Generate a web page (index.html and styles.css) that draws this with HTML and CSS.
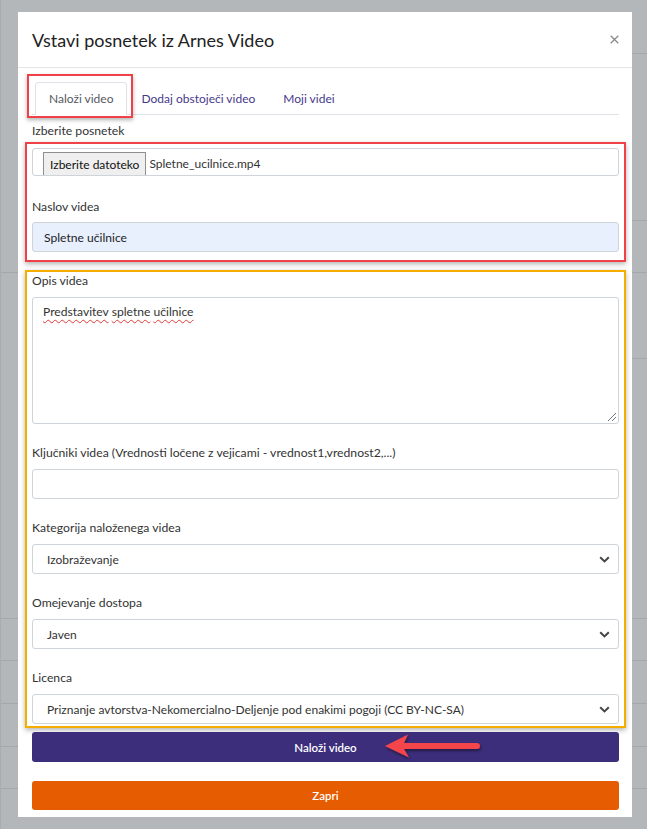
FILE: index.html
```html
<!DOCTYPE html>
<html lang="sl">
<head>
<meta charset="utf-8">
<title>Vstavi posnetek iz Arnes Video</title>
<link rel="stylesheet" href="styles.css">
</head>
<body>
<div class="page">
  <div class="modal">
    <div class="modal-header">
      <h1 class="modal-title">Vstavi posnetek iz Arnes Video</h1>
      <span class="close"><svg width="9" height="9" viewBox="0 0 9 9"><path d="M0.7 0.7 L8.3 8.3 M8.3 0.7 L0.7 8.3" stroke="#8a8a8a" stroke-width="1.3" fill="none"/></svg></span>
    </div>
    <div class="modal-body">
      <ul class="tabs">
        <li class="tab tab-active">Naloži video</li>
        <li class="tab">Dodaj obstoječi video</li>
        <li class="tab">Moji videi</li>
      </ul>
      <div class="label label-first">Izberite posnetek</div>
      <div class="hl hl-red">
        <div class="file-input">
          <span class="file-btn">Izberite datoteko</span>
          <span class="file-name">Spletne_ucilnice.mp4</span>
        </div>
        <div class="label label-title">Naslov videa</div>
        <div class="input input-filled">Spletne učilnice</div>
      </div>
      <div class="hl hl-orange">
        <div class="group">
          <div class="label">Opis videa</div>
          <div class="textarea"><span class="spell">Predstavitev</span> <span class="spell">spletne</span> <span class="spell">učilnice</span><span class="grip"></span></div>
        </div>
        <div class="group">
          <div class="label">Ključniki videa (Vrednosti ločene z vejicami - vrednost1,vrednost2,...)</div>
          <div class="input"></div>
        </div>
        <div class="group">
          <div class="label">Kategorija naloženega videa</div>
          <div class="select"><span>Izobraževanje</span><svg class="chev" width="11" height="7" viewBox="0 0 11 7"><path d="M1.2 1.2 L5.5 5.4 L9.8 1.2" stroke="#444" stroke-width="2" fill="none"/></svg></div>
        </div>
        <div class="group">
          <div class="label">Omejevanje dostopa</div>
          <div class="select"><span>Javen</span><svg class="chev" width="11" height="7" viewBox="0 0 11 7"><path d="M1.2 1.2 L5.5 5.4 L9.8 1.2" stroke="#444" stroke-width="2" fill="none"/></svg></div>
        </div>
        <div class="group group-last">
          <div class="label">Licenca</div>
          <div class="select"><span>Priznanje avtorstva-Nekomercialno-Deljenje pod enakimi pogoji (CC BY-NC-SA)</span><svg class="chev" width="11" height="7" viewBox="0 0 11 7"><path d="M1.2 1.2 L5.5 5.4 L9.8 1.2" stroke="#444" stroke-width="2" fill="none"/></svg></div>
        </div>
      </div>
      <div class="btn btn-primary">Naloži video
        <svg class="arrow" width="110" height="34" viewBox="0 0 110 34"><defs><filter id="sh" x="-20%" y="-40%" width="140%" height="200%"><feDropShadow dx="1" dy="2" stdDeviation="1.6" flood-color="#000" flood-opacity="0.45"/></filter></defs><path d="M4 15 L27 3.5 L23 12 L96 12 A3 3 0 0 1 96 18 L23 18 L28 26.5 Z" fill="#f4444b" filter="url(#sh)"/></svg>
      </div>
      <div class="btn btn-close">Zapri</div>
    </div>
  </div>
</div>
</body>
</html>
```
FILE: styles.css
```css
* { box-sizing: border-box; }
html, body { margin: 0; padding: 0; }
body {
  width: 647px;
  height: 829px;
  overflow: hidden;
  background-color: #b4b7b9;
  background-image:
    linear-gradient(#a5a8aa, #a5a8aa),
    linear-gradient(#a5a8aa, #a5a8aa),
    linear-gradient(#a5a8aa, #a5a8aa),
    linear-gradient(#a5a8aa, #a5a8aa),
    linear-gradient(#a5a8aa, #a5a8aa),
    linear-gradient(#a5a8aa, #a5a8aa),
    linear-gradient(#a5a8aa, #a5a8aa),
    linear-gradient(#a5a8aa, #a5a8aa),
    linear-gradient(#a5a8aa, #a5a8aa);
  background-repeat: no-repeat;
  background-size: 15px 1px, 15px 1px, 100% 1px, 15px 1px, 100% 1px, 100% 1px, 100% 1px, 100% 1px, 100% 1px;
  background-position: 632px 53px, 632px 220px, 0 272px, 632px 358px, 0 618px, 0 660px, 0 703px, 0 746px, 0 788px;
  font-family: "Lato", "Open Sans", sans-serif;
  color: #333;
  font-size: 12.1px;
}
.page {
  height: 829px;
  padding: 12px 15px 0 18px;
  border-left: 1px solid #a9acae;
}
.modal {
  width: 614px;
  background: #fff;
  margin-left: -1px;
}
.modal-header {
  height: 56px;
  display: flex;
  align-items: center;
  justify-content: space-between;
  padding: 0 13px 0 14px;
  border-bottom: 1px solid #e5e5e5;
}
.modal-title {
  margin: 0;
  font-size: 18px;
  font-weight: 400;
  color: #222;
}
.close { display: flex; margin-right: 0; }
.modal-body {
  padding: 14px 13px 7px 14px;
}
.tabs {
  list-style: none;
  margin: 0;
  padding: 0 0 0 3px;
  display: flex;
  border-bottom: 1px solid #dee2e6;
  height: 33px;
}
.tab {
  height: 33px;
  padding: 0 13px;
  border: 1px solid transparent;
  border-radius: 4px 4px 0 0;
  display: flex;
  align-items: center;
  color: #46398a;
  font-size: 12px;
}
.tab-active {
  position: relative;
  color: #55595e;
  border-color: #dee2e6 #dee2e6 #fff;
  background: #fff;
}
.tab-active::after {
  content: "";
  position: absolute;
  left: -9px;
  top: -9px;
  right: -7px;
  bottom: -4px;
  border: 2px solid #f04149;
  box-shadow: 0 2px 4px rgba(0,0,0,0.3);
}
.label {
  line-height: 18px;
  height: 18px;
  margin-bottom: 7px;
  color: #333;
  font-size: 12.2px;
}
.label-first { margin-top: 7px; margin-bottom: 2px; }
.label-title { margin-top: 22px; margin-bottom: 6px; }
.hl {
  margin: 0 -7px 0 -7px;
}
.hl-red {
  border: 2px solid #f04149;
  padding: 4px 5px 8px 5px;
  box-shadow: 0 2px 5px rgba(0,0,0,0.3);
}
.hl-orange {
  margin-top: 8px;
  border: 2px solid #f5ad00;
  padding: 0 5px 2px 5px;
  box-shadow: 0 2px 5px rgba(0,0,0,0.3);
}
.file-input {
  height: 28px;
  border: 1px solid #ced4da;
  border-radius: 3px;
  display: flex;
  align-items: flex-end;
  padding-left: 10px;
}
.file-btn {
  height: 23px;
  display: flex;
  align-items: center;
  padding: 0 6px;
  background: #efefef;
  border: 1px solid #8f8f8f;
  border-bottom: none;
  color: #111;
  font-size: 12px;
}
.file-name {
  height: 23px;
  display: flex;
  align-items: center;
  padding-left: 3px;
  color: #333;
  font-size: 12px;
}
.input {
  height: 30px;
  border: 1px solid #ced4da;
  border-radius: 3px;
  padding: 0 11px;
  display: flex;
  align-items: center;
  color: #222;
}
.input-filled { background: #e8f0fe; }
.group { margin-bottom: 20px; }
.group-last { margin-bottom: 0; }
.textarea {
  position: relative;
  height: 127px;
  border: 1px solid #ced4da;
  border-radius: 3px;
  padding: 5px 10px;
  color: #333;
  line-height: 18px;
}
.spell {
  text-decoration: underline wavy #e53935;
  text-decoration-thickness: 1px;
  text-underline-offset: 3px;
}
.grip {
  position: absolute;
  right: 2px;
  bottom: 2px;
  width: 8px;
  height: 8px;
  background: linear-gradient(135deg, transparent 45%, #777 45%, #777 55%, transparent 55%, transparent 70%, #777 70%, #777 80%, transparent 80%);
}
.select {
  height: 30px;
  border: 1px solid #ced4da;
  border-radius: 3px;
  padding: 0 8px 0 14px;
  display: flex;
  align-items: center;
  justify-content: space-between;
  color: #333;
  font-size: 12px;
}
.chev { flex: none; }
.btn {
  height: 30px;
  border-radius: 3px;
  display: flex;
  align-items: center;
  justify-content: center;
  color: #fff;
  font-size: 11.5px;
  font-weight: 600;
}
.btn-primary {
  position: relative;
  margin-top: 4px;
  background: #3c2e7b;
}
.btn-close {
  margin-top: 19px;
  height: 29px;
  background: #e65c00;
}
.arrow {
  position: absolute;
  left: 349px;
  top: -1px;
}
```
